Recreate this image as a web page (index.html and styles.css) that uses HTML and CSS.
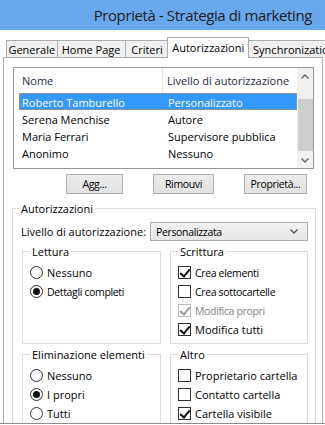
FILE: index.html
```html
<!DOCTYPE html>
<html lang="it">
<head>
<meta charset="utf-8">
<title>Proprietà - Strategia di marketing</title>
<link rel="stylesheet" href="styles.css">
</head>
<body>
<div class="window">
  <div class="titlebar"><span class="title">Proprietà - Strategia di marketing</span></div>
  <div class="tabs">
    <div class="tab t-gen">Generale</div>
    <div class="tab t-home">Home Page</div>
    <div class="tab t-crit">Criteri</div>
    <div class="tab t-aut active">Autorizzazioni</div>
    <div class="tab t-sync">Synchronization</div>
  </div>
  <div class="panel">
    <div class="listbox">
      <div class="list-main">
        <div class="list-header">
          <div class="col1">Nome</div>
          <div class="col2">Livello di autorizzazione</div>
        </div>
        <div class="row selected"><div class="col1">Roberto Tamburello</div><div class="col2">Personalizzato</div></div>
        <div class="row"><div class="col1">Serena Menchise</div><div class="col2">Autore</div></div>
        <div class="row"><div class="col1">Maria Ferrari</div><div class="col2">Supervisore pubblica</div></div>
        <div class="row"><div class="col1">Anonimo</div><div class="col2">Nessuno</div></div>
      </div>
      <div class="scrollbar">
        <div class="sb-arrow"><svg width="8" height="5" viewBox="0 0 8 5"><path d="M0.5 4.5 L4 1 L7.5 4.5" fill="none" stroke="#606060" stroke-width="1.3"/></svg></div>
        <div class="sb-track"><div class="sb-thumb"></div></div>
        <div class="sb-arrow"><svg width="8" height="5" viewBox="0 0 8 5"><path d="M0.5 0.5 L4 4 L7.5 0.5" fill="none" stroke="#606060" stroke-width="1.3"/></svg></div>
      </div>
    </div>
    <div class="buttons">
      <div class="btn b-add narrow">Agg...</div>
      <div class="btn b-rem narrow">Rimouvi</div>
      <div class="btn b-prop narrow">Proprietà...</div>
    </div>
    <fieldset class="group main-group">
      <legend>Autorizzazioni</legend>
      <div class="level-row">
        <span class="level-label">Livello di autorizzazione:</span>
        <div class="select"><span class="narrow">Personalizzata</span><svg width="8" height="5" viewBox="0 0 8 5"><path d="M0.5 0.5 L4 4 L7.5 0.5" fill="none" stroke="#505050" stroke-width="1.3"/></svg></div>
      </div>
      <div class="subgroups">
        <fieldset class="group sub">
          <legend>Lettura</legend>
          <div class="opt"><span class="radio"></span><span>Nessuno</span></div>
          <div class="opt"><span class="radio on"></span><span class="narrow">Dettagli completi</span></div>
        </fieldset>
        <fieldset class="group sub">
          <legend>Scrittura</legend>
          <div class="opt"><span class="check on"></span><span class="narrow">Crea elementi</span></div>
          <div class="opt"><span class="check"></span><span class="narrow">Crea sottocartelle</span></div>
          <div class="opt disabled"><span class="check on"></span><span class="narrow">Modifica propri</span></div>
          <div class="opt"><span class="check on"></span><span>Modifica tutti</span></div>
        </fieldset>
        <fieldset class="group sub">
          <legend>Eliminazione elementi</legend>
          <div class="opt"><span class="radio"></span><span>Nessuno</span></div>
          <div class="opt"><span class="radio on"></span><span>I propri</span></div>
          <div class="opt"><span class="radio"></span><span>Tutti</span></div>
        </fieldset>
        <fieldset class="group sub">
          <legend>Altro</legend>
          <div class="opt"><span class="check"></span><span>Proprietario cartella</span></div>
          <div class="opt"><span class="check"></span><span>Contatto cartella</span></div>
          <div class="opt"><span class="check on"></span><span>Cartella visibile</span></div>
        </fieldset>
      </div>
    </fieldset>
  </div>
</div>
</body>
</html>
```
FILE: styles.css
```css
* { box-sizing: border-box; }
html, body { margin: 0; padding: 0; background: #fff; }
.window {
  width: 325px;
  height: 424px;
  overflow: hidden;
  background: #fff;
  border-bottom: 1px solid #8c8c8c;
  font-family: "Open Sans", "Noto Sans", sans-serif;
  font-size: 11px;
  color: #000;
  padding-left: 1px;
}
.narrow {
  font-size: 10.5px;
  letter-spacing: -0.35px;
}
.titlebar {
  height: 30px;
  margin-left: -1px;
  background: #68a9ee;
  display: flex;
  align-items: center;
  justify-content: flex-end;
  padding-right: 13px;
  font-size: 15px;
  color: #1d1d1d;
  letter-spacing: -0.4px;
}
.tabs {
  height: 27px;
  display: flex;
  align-items: flex-end;
  padding-left: 5px;
  position: relative;
  z-index: 2;
}
.tab {
  height: 17px;
  border: 1px solid #acacac;
  border-bottom: none;
  margin-right: -1px;
  background: #f0f0f0;
  display: flex;
  align-items: center;
  justify-content: center;
  white-space: nowrap;
  overflow: hidden;
  line-height: 15px;
}
.t-gen { width: 53px; }
.t-home { width: 71px; }
.t-crit { width: 46px; }
.t-aut { width: 84px; }
.t-sync { width: 80px; justify-content: flex-start; padding-left: 4px; }
.tab.active {
  height: 21px;
  margin-bottom: -1px;
  background: #fff;
  padding-bottom: 2px;
  margin-left: -1px;
}
.panel {
  margin-left: 2px;
  width: 320px;
  height: 380px;
  border: 1px solid #acacac;
  padding: 9px 8px 0 9px;
}
.listbox {
  height: 102px;
  border: 1px solid #969696;
  display: flex;
}
.list-main { flex: 1; }
.list-header {
  height: 25px;
  display: flex;
  align-items: center;
  color: #1e2a44;
}
.list-header .col1 { width: 149px; padding-left: 8px; height: 100%; display: flex; align-items: center; border-right: 1px solid #e5e5e5; }
.list-header .col2 { padding-left: 4px; }
.row {
  height: 17px;
  display: flex;
  align-items: center;
  margin-left: 5px;
  border: 1px solid transparent;
  padding-top: 1px;
}
.row .col1 { width: 145px; padding-left: 2px; }
.row .col2 { padding-left: 3px; }
.row.selected {
  background: #3399ff;
  color: #fff;
  border: 1px dotted #e58a2e;
}
.scrollbar {
  width: 16px;
  background: #f0f0f0;
  display: flex;
  flex-direction: column;
}
.sb-arrow { height: 16px; display: flex; align-items: center; justify-content: center; }
.sb-track { flex: 1; padding-top: 15px; padding-left: 1px; }
.sb-thumb { height: 52px; background: #cdcdcd; }
.buttons {
  display: flex;
  justify-content: flex-end;
  gap: 30px;
  margin-top: 5px;
  padding-right: 7px;
}
.btn {
  height: 20px;
  border: 1px solid #adadad;
  background: linear-gradient(#ececec, #e1e1e1);
  display: flex;
  align-items: center;
  justify-content: center;
}
.b-add { width: 57px; }
.b-rem { width: 61px; }
.b-prop { width: 63px; }
.group {
  border: 1px solid #dcdcdc;
  margin: 0;
  min-width: 0;
}
.group legend {
  padding: 0 2px;
  line-height: 15px;
}
.main-group {
  margin: 7px -2px 0 -1px;
  padding: 0 7px 20px 6px;
}
.level-row {
  display: flex;
  align-items: center;
  margin-top: 6px;
  padding-left: 2px;
}
.level-label { flex: 1; }
.select {
  width: 158px;
  height: 19px;
  border: 1px solid #acacac;
  background: linear-gradient(#f2f2f2, #e6e6e6);
  display: flex;
  align-items: center;
  justify-content: space-between;
  padding: 0 9px 0 5px;
}
.subgroups {
  display: grid;
  grid-template-columns: 139px 138px;
  column-gap: 9px;
  row-gap: 3px;
  margin: 3px 0 0 3px;
}
.sub {
  padding: 4px 6px 4px 7px;
}
.opt {
  height: 19px;
  display: flex;
  align-items: center;
  gap: 4px;
  white-space: nowrap;
}
.opt.disabled { color: #838383; }
.radio {
  width: 13px;
  height: 13px;
  border: 1px solid #333;
  border-radius: 50%;
  background: #fff;
  display: flex;
  align-items: center;
  justify-content: center;
  flex: none;
}
.radio.on::after {
  content: "";
  width: 7px;
  height: 7px;
  border-radius: 50%;
  background: #111;
}
.check {
  width: 13px;
  height: 13px;
  border: 1px solid #333;
  background: #fff;
  flex: none;
  position: relative;
}
.check.on::after {
  content: "";
  position: absolute;
  left: 3px;
  top: 0px;
  width: 4px;
  height: 8px;
  border-right: 2px solid #111;
  border-bottom: 2px solid #111;
  transform: rotate(40deg);
}
.opt.disabled .check { border-color: #bcbcbc; }
.opt.disabled .check.on::after { border-color: #9a9a9a; }
```
